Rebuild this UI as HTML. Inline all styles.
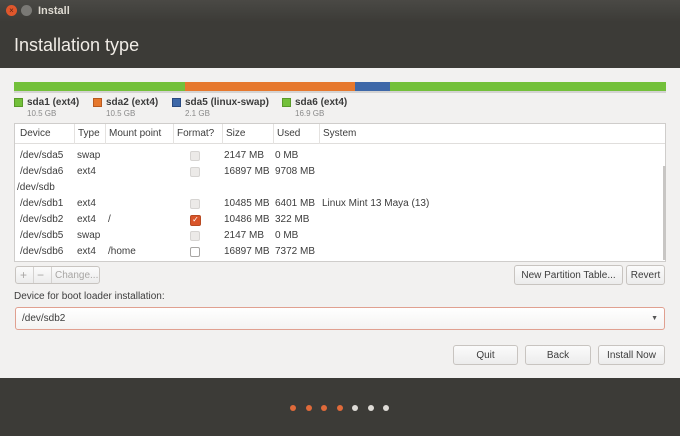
<!DOCTYPE html>
<html><head><style>
*{margin:0;padding:0;box-sizing:border-box}
body{width:680px;height:436px;overflow:hidden;font-family:"Liberation Sans",sans-serif;background:#f2f1f0;position:relative;font-size:10px;color:#3c3c3c}
.a{position:absolute}
.btn{position:absolute;border:1px solid #c8c4c0;border-radius:3px;background:linear-gradient(#fbfbfb,#ececec);text-align:center;font-size:10px;color:#3c3c3c}
.row{position:absolute;left:0;height:16px;line-height:16px;width:100%}
.row span{position:absolute}
.cb{position:absolute;width:10px;height:10px;border:1px solid #d6d4d2;border-radius:2px;background:#eceae8;left:176px;top:3px}
</style></head><body>
<div class="a" style="left:0;top:0;width:680px;height:68px;background:#3c3b37"></div>
<div class="a" style="left:0;top:0;width:680px;height:22px;background:linear-gradient(#4a4945,#3c3b37)"></div>
<div class="a" style="left:6px;top:5px;width:11px;height:11px;border-radius:50%;background:#e0572c;color:#5a2010;font-size:8px;line-height:11px;text-align:center">×</div>
<div class="a" style="left:21px;top:5px;width:11px;height:11px;border-radius:50%;background:#7a7975"></div>
<div class="a" style="left:38px;top:5px;color:#dfdbd2;font-weight:bold;font-size:11px">Install</div>
<div class="a" style="left:14px;top:35px;color:#f0ece6;font-size:18px">Installation type</div>

<div class="a" style="left:14px;top:82px;width:652px;height:11px;display:flex;border-bottom:2px solid rgba(0,0,0,.12)">
<div style="width:171px;background:#73c03a"></div><div style="width:170px;background:#e6782d"></div><div style="width:35px;background:#3e68a8"></div><div style="flex:1;background:#73c03a"></div></div>

<div class="a" style="left:14px;top:98px;width:9px;height:9px;background:#73c03a;border:1px solid #5a9a2a"></div>
<div class="a" style="left:27px;top:97px;font-size:10px;font-weight:bold;color:#3c3c3c">sda1 (ext4)</div>
<div class="a" style="left:27px;top:109px;font-size:8px;color:#8a8a8a">10.5 GB</div>
<div class="a" style="left:93px;top:98px;width:9px;height:9px;background:#e6782d;border:1px solid #b85a20"></div>
<div class="a" style="left:106px;top:97px;font-size:10px;font-weight:bold">sda2 (ext4)</div>
<div class="a" style="left:106px;top:109px;font-size:8px;color:#8a8a8a">10.5 GB</div>
<div class="a" style="left:172px;top:98px;width:9px;height:9px;background:#3e68a8;border:1px solid #2a4a80"></div>
<div class="a" style="left:185px;top:97px;font-size:10px;font-weight:bold">sda5 (linux-swap)</div>
<div class="a" style="left:185px;top:109px;font-size:8px;color:#8a8a8a">2.1 GB</div>
<div class="a" style="left:282px;top:98px;width:9px;height:9px;background:#73c03a;border:1px solid #5a9a2a"></div>
<div class="a" style="left:295px;top:97px;font-size:10px;font-weight:bold">sda6 (ext4)</div>
<div class="a" style="left:295px;top:109px;font-size:8px;color:#8a8a8a">16.9 GB</div>

<div class="a" style="left:14px;top:123px;width:652px;height:139px;background:#fff;border:1px solid #cfcdcb">
<div class="a" style="left:0;top:0;width:100%;height:20px;border-bottom:1px solid #e0dedc;line-height:20px;font-size:10px">
<span class="a" style="left:5px">Device</span><span class="a" style="left:63px">Type</span><span class="a" style="left:94px">Mount point</span><span class="a" style="left:162px">Format?</span><span class="a" style="left:211px">Size</span><span class="a" style="left:262px">Used</span><span class="a" style="left:308px">System</span>
<div class="a" style="left:59px;top:0;width:1px;height:20px;background:#e4e2e0"></div>
<div class="a" style="left:90px;top:0;width:1px;height:20px;background:#e4e2e0"></div>
<div class="a" style="left:158px;top:0;width:1px;height:20px;background:#e4e2e0"></div>
<div class="a" style="left:207px;top:0;width:1px;height:20px;background:#e4e2e0"></div>
<div class="a" style="left:258px;top:0;width:1px;height:20px;background:#e4e2e0"></div>
<div class="a" style="left:304px;top:0;width:1px;height:20px;background:#e4e2e0"></div>
</div>
<div class="a" style="left:648px;top:42px;width:3px;height:94px;background:#c8c6c4"></div>
</div>
<div class="a" style="left:14px;top:148px;width:640px;font-size:10px">
<div class="row" style="top:0"><span style="left:6px">/dev/sda5</span><span style="left:63px">swap</span><div class="cb"></div><span style="left:210px">2147 MB</span><span style="left:261px">0 MB</span></div>
<div class="row" style="top:16px"><span style="left:6px">/dev/sda6</span><span style="left:63px">ext4</span><div class="cb"></div><span style="left:210px">16897 MB</span><span style="left:261px">9708 MB</span></div>
<div class="row" style="top:32px"><span style="left:3px">/dev/sdb</span></div>
<div class="row" style="top:48px"><span style="left:6px">/dev/sdb1</span><span style="left:63px">ext4</span><div class="cb"></div><span style="left:210px">10485 MB</span><span style="left:261px">6401 MB</span><span style="left:308px">Linux Mint 13 Maya (13)</span></div>
<div class="row" style="top:64px"><span style="left:6px">/dev/sdb2</span><span style="left:63px">ext4</span><span style="left:94px">/</span><div class="cb" style="background:#d9552a;border-color:#b84a22;color:#fff;font-size:8px;line-height:8px;text-align:center;width:11px;height:11px">✓</div><span style="left:210px">10486 MB</span><span style="left:261px">322 MB</span></div>
<div class="row" style="top:80px"><span style="left:6px">/dev/sdb5</span><span style="left:63px">swap</span><div class="cb"></div><span style="left:210px">2147 MB</span><span style="left:261px">0 MB</span></div>
<div class="row" style="top:96px"><span style="left:6px">/dev/sdb6</span><span style="left:63px">ext4</span><span style="left:94px">/home</span><div class="cb" style="background:#fff;border-color:#a8a6a4"></div><span style="left:210px">16897 MB</span><span style="left:261px">7372 MB</span></div>
</div>

<div class="btn" style="left:15px;top:266px;width:85px;height:18px;color:#a8a6a4;line-height:17px;text-align:left"><span style="position:absolute;left:4px;font-size:12px">+</span><span style="position:absolute;left:17px;top:0;width:1px;height:16px;background:#d4d2d0"></span><span style="position:absolute;left:21px;font-size:12px">−</span><span style="position:absolute;left:35px;top:0;width:1px;height:16px;background:#d4d2d0"></span><span style="position:absolute;left:39px">Change...</span></div>
<div class="btn" style="left:514px;top:265px;width:109px;height:20px;line-height:19px">New Partition Table...</div>
<div class="btn" style="left:626px;top:265px;width:39px;height:20px;line-height:19px">Revert</div>

<div class="a" style="left:14px;top:291px;font-size:10px">Device for boot loader installation:</div>
<div class="a" style="left:15px;top:307px;width:650px;height:23px;border:1px solid #e0a090;border-radius:3px;background:linear-gradient(#fff,#f4f3f2);line-height:22px;padding-left:6px">/dev/sdb2<span style="position:absolute;right:6px;font-size:7px;color:#555">▼</span></div>

<div class="btn" style="left:453px;top:345px;width:65px;height:20px;line-height:20px">Quit</div>
<div class="btn" style="left:525px;top:345px;width:66px;height:20px;line-height:20px">Back</div>
<div class="btn" style="left:598px;top:345px;width:67px;height:20px;line-height:20px">Install Now</div>

<div class="a" style="left:0;top:378px;width:680px;height:58px;background:#3c3b37"></div>
<div class="a" style="left:290px;top:405px;width:6px;height:6px;border-radius:50%;background:#e06a3a"></div>
<div class="a" style="left:306px;top:405px;width:6px;height:6px;border-radius:50%;background:#e06a3a"></div>
<div class="a" style="left:321px;top:405px;width:6px;height:6px;border-radius:50%;background:#e06a3a"></div>
<div class="a" style="left:337px;top:405px;width:6px;height:6px;border-radius:50%;background:#e06a3a"></div>
<div class="a" style="left:352px;top:405px;width:6px;height:6px;border-radius:50%;background:#dedbd6"></div>
<div class="a" style="left:368px;top:405px;width:6px;height:6px;border-radius:50%;background:#dedbd6"></div>
<div class="a" style="left:383px;top:405px;width:6px;height:6px;border-radius:50%;background:#dedbd6"></div>
</body></html>
